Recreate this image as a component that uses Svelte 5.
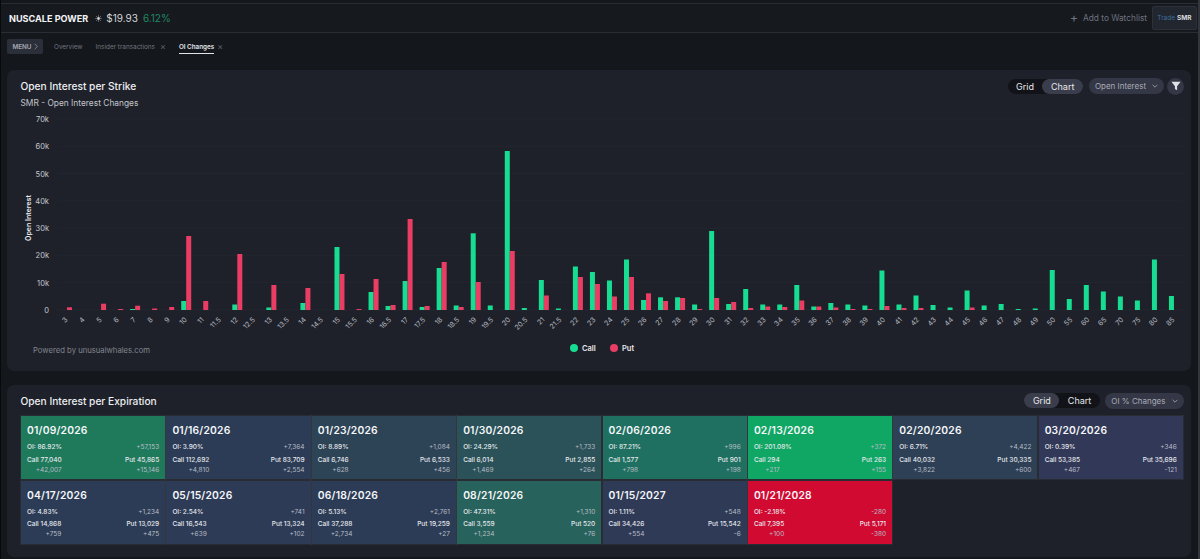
<script>
  const strikes = [
    ['3',0,2.7],['4',0,0],['5',0,6.3],['6',0,1],['7',1,4.3],['8',0,1.5],['9',0,3],['10',9,74],['11',0,9],['11.5',0,0],
    ['12',5.5,56],['12.5',0,0],['13',2.5,25],['13.5',0,0],['14',7,22],['14.5',0,0],['15',63,36],['15.5',0,1],['16',18,31],['16.5',4,5],
    ['17',29,91],['17.5',3,4],['18',42,48],['18.5',4.5,3],['19',76.7,28],['19.5',4.5,0],['20',159,59],['20.5',2,0],['21',30,14.5],['21.5',1.5,0],
    ['22',43.5,33],['23',38,26],['24',29.5,13.5],['25',50.5,33],['26',10,16.7],['27',12.7,9],['28',12.7,12],['29',5.5,1],['30',79,12],['31',6,8],
    ['32',21,2],['33',5.5,3.5],['34',5.5,3],['35',25,9.5],['36',3.5,3.5],['37',7,2.5],['38',5.5,1],['39',4.5,1],['40',39.5,4],['41',5.5,2],
    ['42',14.5,2],['43',5,0],['44',2.5,0],['45',19.5,2.5],['46',4.5,0],['47',6,0],['48',1,0],['49',1.5,0],['50',40,0],['55',11,0],
    ['60',25,0],['65',18.5,0],['70',13.5,0],['75',9.5,0],['80',50.5,0],['85',14,0]
  ];
  const ticks = ['0','10k','20k','30k','40k','50k','60k','70k'];
  const base = 201;
  const step = 27.3;
  const x0 = 60;
  const dx = 17.03;

  const cards = [
    { d:'01/09/2026', oi:'86.92%', t:'+57,153', c:'77,040', p:'45,865', cd:'+42,007', pd:'+15,146', bg:'#1f7a5c' },
    { d:'01/16/2026', oi:'3.90%', t:'+7,364', c:'112,692', p:'83,709', cd:'+4,810', pd:'+2,554', bg:'#2c3c56' },
    { d:'01/23/2026', oi:'8.89%', t:'+1,084', c:'6,746', p:'6,533', cd:'+628', pd:'+456', bg:'#2d4356' },
    { d:'01/30/2026', oi:'24.29%', t:'+1,733', c:'6,014', p:'2,855', cd:'+1,469', pd:'+264', bg:'#2a5258' },
    { d:'02/06/2026', oi:'87.21%', t:'+996', c:'1,577', p:'901', cd:'+798', pd:'+198', bg:'#1f7060' },
    { d:'02/13/2026', oi:'201.08%', t:'+372', c:'294', p:'263', cd:'+217', pd:'+155', bg:'#10a765' },
    { d:'02/20/2026', oi:'6.71%', t:'+4,422', c:'40,032', p:'30,335', cd:'+3,822', pd:'+600', bg:'#2d4056' },
    { d:'03/20/2026', oi:'0.39%', t:'+346', c:'53,385', p:'35,696', cd:'+467', pd:'-121', bg:'#323858' },
    { d:'04/17/2026', oi:'4.83%', t:'+1,234', c:'14,868', p:'13,029', cd:'+759', pd:'+475', bg:'#2c3c56' },
    { d:'05/15/2026', oi:'2.54%', t:'+741', c:'16,543', p:'13,324', cd:'+639', pd:'+102', bg:'#2d3b57' },
    { d:'06/18/2026', oi:'5.13%', t:'+2,761', c:'37,288', p:'19,259', cd:'+2,734', pd:'+27', bg:'#2c3c56' },
    { d:'08/21/2026', oi:'47.31%', t:'+1,310', c:'3,559', p:'520', cd:'+1,234', pd:'+76', bg:'#28625c' },
    { d:'01/15/2027', oi:'1.11%', t:'+548', c:'34,426', p:'15,542', cd:'+554', pd:'-6', bg:'#2f3a57' },
    { d:'01/21/2028', oi:'-2.18%', t:'-280', c:'7,395', p:'5,171', cd:'+100', pd:'-380', bg:'#d10a32' }
  ];
</script>

<div class="page">
  <header class="head">
    <div class="ident">
      <span class="name">NUSCALE POWER</span>
      <svg class="sun" viewBox="0 0 10 10" width="7" height="7" aria-hidden="true">
        <circle cx="5" cy="5" r="2" fill="#c9ccd2"/>
        <path d="M5 .5v2M5 7.5v2M.5 5h2M7.5 5h2M1.8 1.8l1.4 1.4M6.8 6.8l1.4 1.4M8.2 1.8 6.8 3.2M3.2 6.8 1.8 8.2" stroke="#c9ccd2" stroke-width=".8"/>
      </svg>
      <span class="price">$19.93</span>
      <span class="chg">6.12%</span>
    </div>
    <div class="actions">
      <span class="watch"><span class="plus">+</span>Add to Watchlist</span>
      <span class="trade"><span class="tr">Trade</span> <b>SMR</b></span>
    </div>
  </header>

  <nav class="tabs">
    <span class="menu">MENU
      <svg viewBox="0 0 6 10" width="4" height="7" aria-hidden="true"><path d="M1 1l4 4-4 4" fill="none" stroke="#a5a9b4" stroke-width="1"/></svg>
    </span>
    <span class="tab">Overview</span>
    <span class="tab">Insider transactions<span class="x">×</span></span>
    <span class="tab on"><span class="lbl">OI Changes</span><span class="x">×</span></span>
  </nav>

  <section class="panel top">
    <div class="ph">
      <h2>Open Interest per Strike</h2>
      <div class="tools">
        <div class="seg"><span>Grid</span><span class="act">Chart</span></div>
        <div class="drop">Open Interest
          <svg viewBox="0 0 10 6" width="6" height="4" aria-hidden="true"><path d="M1 1l4 4 4-4" fill="none" stroke="#b5b8c2" stroke-width="1.2"/></svg>
        </div>
        <div class="filter">
          <svg viewBox="0 0 12 12" width="10" height="10" aria-hidden="true"><path d="M.5 1h11L7.3 6.4V11L4.7 9.6V6.4z" fill="#dfe1e6"/></svg>
        </div>
      </div>
    </div>
    <div class="sub">SMR - Open Interest Changes</div>
    <svg class="chart" viewBox="0 0 1184 262" width="1184" height="262" aria-label="Open Interest per Strike chart">
      {#each ticks as t, i}
        <line x1="51" x2="1176" y1={base - i * step} y2={base - i * step} stroke="#23262e" stroke-width="1"/>
        <text class="yt" x="42" y={base - i * step + 3} text-anchor="end">{t}</text>
      {/each}
      <text class="yl" transform="translate(24 {base - 92}) rotate(-90)" text-anchor="middle">Open Interest</text>
      {#each strikes as s, i}
        {@const cx = x0 + i * dx}
        {#if s[1] > 0}
          <rect x={cx - 5} y={base - s[1]} width="5" height={s[1]} fill="#17dd92"/>
        {/if}
        {#if s[2] > 0}
          <rect x={cx} y={base - s[2]} width="5" height={s[2]} fill="#ea3d64"/>
        {/if}
        <text class="xt" transform="translate({cx - 1} {base + 8}) rotate(-45)" text-anchor="end" dy="3">{s[0]}</text>
      {/each}
      <text class="pw" x="26" y="244">Powered by unusualwhales.com</text>
      <circle cx="567" cy="239" r="4" fill="#17dd92"/>
      <text class="lg" x="575" y="242">Call</text>
      <circle cx="607" cy="239" r="4" fill="#ea3d64"/>
      <text class="lg" x="615" y="242">Put</text>
    </svg>
  </section>

  <section class="panel bottom">
    <div class="ph">
      <h2>Open Interest per Expiration</h2>
      <div class="tools narrow">
        <div class="seg"><span class="act">Grid</span><span>Chart</span></div>
        <div class="drop">OI % Changes
          <svg viewBox="0 0 10 6" width="6" height="4" aria-hidden="true"><path d="M1 1l4 4 4-4" fill="none" stroke="#b5b8c2" stroke-width="1.2"/></svg>
        </div>
      </div>
    </div>
    <div class="grid">
      {#each cards as c}
        <div class="card" style="background:{c.bg}">
          <div class="date">{c.d}</div>
          <div class="row oi"><span>OI: {c.oi}</span><span class="dim">{c.t}</span></div>
          <div class="row">
            <div class="col"><span>Call {c.c}</span><span class="dim">{c.cd}</span></div>
            <div class="col"><span>Put {c.p}</span><span class="dim">{c.pd}</span></div>
          </div>
        </div>
      {/each}
    </div>
  </section>
</div>

<style>
  :global(body) { margin: 0; background: #14171c; }
  .page {
    width: 1200px; height: 559px; overflow: hidden; box-sizing: border-box;
    background: #14171c; color: #fff;
    font-family: Inter, "Liberation Sans", sans-serif;
    border-left: 1px solid #08090b;
    border-right: 2px solid #33363d;
  }
  .head {
    height: 30px; margin-top: 3px; box-sizing: border-box;
    border-top: 1px solid #2a2d33; border-bottom: 1px solid #2a2d33;
    display: flex; justify-content: space-between; align-items: center;
    padding: 0 1px 0 8px; background: #16191e;
  }
  .ident { display: flex; align-items: center; }
  .name { font-size: 9.1px; font-weight: 700; color: #f2f3f5; margin-right: 7px; }
  .price { font-size: 10px; color: #d3d5da; margin-left: 4px; }
  .chg { font-size: 10px; color: #1f8a66; margin-left: 5px; }
  .actions { display: flex; align-items: center; gap: 5px; }
  .watch { font-size: 8.3px; color: #6e7280; display: flex; align-items: center; }
  .plus { color: #6e7a86; font-size: 12px; margin-right: 5px; line-height: 1; }
  .trade {
    width: 45px; height: 24px; box-sizing: border-box; background: #22262f; border-radius: 2px;
    display: flex; align-items: center; justify-content: center; gap: 2px; font-size: 6.5px;
    border: 1px solid #2d3038;
  }
  .tr { color: #3f6f9c; }
  .trade b { color: #d8dade; font-weight: 700; }
  .tabs {
    height: 30px; display: flex; align-items: center; padding: 0 0 3px 6px; background: #14171c;
    box-sizing: border-box;
  }
  .menu {
    width: 36px; height: 15px; box-sizing: border-box; background: #2b2f3a; border-radius: 2px;
    color: #a5a9b4; font-size: 6.3px; font-weight: 600; display: flex; align-items: center; justify-content: center; gap: 2px;
    margin-right: 11px;
  }
  .tab { font-size: 6.4px; color: #72767f; display: flex; align-items: center; margin-right: 13px; }
  .tab.on { color: #e3e5e9; font-weight: 600; font-size: 6.3px; margin-right: 0; margin-left: 0; }
  .tab.on .x { margin-left: 3px; }
  .lbl { border-bottom: 1px solid #e3e5e9; padding: 3px 0 2px; margin-top: 1px; }
  .x { color: #5b5f68; font-size: 9px; margin-left: 5px; font-weight: 400; line-height: 1; }
  .panel { margin: 0 6px; background: #1e2129; border-radius: 7px; width: 1184px; }
  .top { margin-top: 7px; height: 301px; padding-top: 1px; box-sizing: border-box; }
  .bottom { margin-top: 14px; height: 172px; box-sizing: border-box; }
  .ph { display: flex; justify-content: space-between; align-items: center; height: 30px; padding: 0 7px 0 13.5px; }
  .bottom .ph { height: 31px; }
  h2 { margin: 0; font-size: 10.2px; line-height: 14px; font-weight: 500; color: #eceef1; }
  .tools { display: flex; align-items: center; gap: 6px; }
  .tools.narrow { gap: 5px; }
  .seg { display: flex; background: #111318; border-radius: 9px; height: 15px; font-size: 9px; color: #e6e7ea; align-items: center; }
  .seg span { height: 15px; line-height: 15px; padding: 0 8.5px; border-radius: 8px; }
  .seg .act { background: #3a3d4c; }
  .drop {
    height: 16px; border-radius: 8px; background: #343745; color: #a8abb6; font-size: 8px;
    display: flex; align-items: center; gap: 6px; padding: 0 6px;
  }
  .narrow .drop { padding: 0 6.5px; }
  .filter { width: 17px; height: 17px; border-radius: 50%; background: #343745; display: flex; align-items: center; justify-content: center; margin-left: -3px; }
  .sub { font-size: 8.4px; color: #c3c5cc; padding-left: 13.5px; line-height: 12px; margin-top: -4px; }
  .chart { display: block; overflow: visible; }
  .chart text { font-family: Inter, "Liberation Sans", sans-serif; }
  .yt { font-size: 7.5px; fill: #c6c8ce; }
  .yl { font-size: 7px; font-weight: 600; fill: #eceef1; }
  .xt { font-size: 7px; fill: #b6b9c0; }
  .pw { font-size: 7.7px; fill: #82858f; }
  .lg { font-size: 7.5px; font-weight: 600; fill: #e6e7ea; }
  .grid { display: grid; grid-template-columns: repeat(8, 144.2px); gap: 1.5px 1.2px; padding: 0 0 0 14px; }
  .card {
    height: 63px; box-sizing: border-box; padding: 6px 6px 0; color: #e7e9ed;
    outline: 0.5px solid rgba(255,255,255,.05); outline-offset: -0.5px;
  }
  .date { font-size: 10.3px; font-weight: 600; line-height: 16px; letter-spacing: .2px; color: #f5f6f8; margin-bottom: 4px; }
  .row { display: flex; justify-content: space-between; font-size: 6.5px; line-height: 10px; font-weight: 500; }
  .oi { margin-bottom: 2.5px; }
  .col { display: flex; flex-direction: column; align-items: flex-end; }
  .dim { color: #b8bcc5; font-weight: 400; }
</style>
